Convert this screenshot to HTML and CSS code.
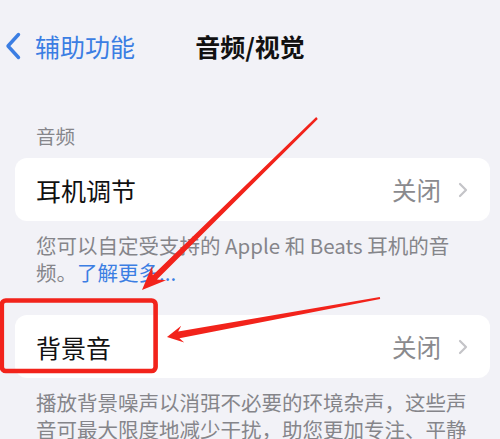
FILE: index.html
```html
<!DOCTYPE html>
<html lang="zh-CN">
<head>
<meta charset="utf-8">
<title>音频/视觉</title>
<link rel="stylesheet" href="styles.css">
</head>
<body>
<div class="screen">
  <header class="nav">
    <a class="back" href="#">
      <svg class="back-icon" width="16" height="28" viewBox="0 0 16 28" aria-hidden="true">
        <polyline points="13.5,2.5 3,14 13.5,25.5" fill="none" stroke="currentColor" stroke-width="3.4" stroke-linecap="round" stroke-linejoin="round"/>
      </svg>
      <span>辅助功能</span>
    </a>
    <h1 class="title">音频/视觉</h1>
    <span class="nav-spacer"></span>
  </header>

  <section class="group group-first">
    <h2 class="group-head">音频</h2>
    <div class="card">
      <div class="row">
        <span class="label">耳机调节</span>
        <span class="value">关闭</span>
        <svg class="chevron" width="10" height="16" viewBox="0 0 10 16" aria-hidden="true">
          <polyline points="2,2 8,8 2,14" fill="none" stroke="currentColor" stroke-width="2.2" stroke-linecap="round" stroke-linejoin="round"/>
        </svg>
      </div>
    </div>
    <p class="group-foot">您可以自定受支持的 Apple 和 Beats 耳机的音频。<a class="link" href="#">了解更多...</a></p>
  </section>

  <section class="group group-second">
    <div class="card">
      <div class="row">
        <span class="label">背景音</span>
        <span class="value">关闭</span>
        <svg class="chevron" width="10" height="16" viewBox="0 0 10 16" aria-hidden="true">
          <polyline points="2,2 8,8 2,14" fill="none" stroke="currentColor" stroke-width="2.2" stroke-linecap="round" stroke-linejoin="round"/>
        </svg>
      </div>
    </div>
    <p class="group-foot">播放背景噪声以消弭不必要的环境杂声，这些声音可最大限度地减少干扰，助您更加专注、平静</p>
  </section>

  <!-- red annotation layer drawn over the settings list -->
  <svg class="marks" width="500" height="439" viewBox="0 0 500 439" aria-hidden="true">
    <rect x="1.8" y="300.5" width="153.8" height="70.5" rx="4" fill="none" stroke="#f2231b" stroke-width="4.6"/>
    <polygon fill="#f2231b" points="317.8,118.9 156.96,279.5 166.1,280.3 142,290 152.1,266.1 152.74,275.2 316.2,117.1"/>
    <polygon fill="#f2231b" points="380.18,298.98 179.43,338.28 184.27,342.5 167,337 181.21,325.76 178.17,331.4 379.82,297.02"/>
  </svg>
</div>
</body>
</html>
```

FILE: styles.css
```css
html, body {
  margin: 0;
  padding: 0;
}

body {
  background: #f2f2f7;
  font-family: "Noto Sans CJK SC", "Noto Sans", sans-serif;
  color: #111;
}

.screen {
  position: relative;
  width: 500px;
  height: 439px;
  overflow: hidden;
  background: #f2f2f7;
}

/* navigation bar */
.nav {
  display: grid;
  grid-template-columns: 1fr auto 1fr;
  align-items: center;
  height: 36px;
  padding: 28px 0 0 5px;
}

.back {
  display: flex;
  align-items: center;
  gap: 14px;
  color: #3b7ee3;
  text-decoration: none;
  font-size: 25px;
  line-height: 36px;
}

.back-icon {
  display: block;
}

.title {
  margin: 0 0 0 -5px;
  font-size: 25px;
  line-height: 36px;
  font-weight: 700;
  color: #111;
}

/* grouped list */
.group-first {
  margin-top: 60px;
}

.group-second {
  margin-top: 29.5px;
}

.group-head {
  margin: 0 0 10px 36px;
  font-size: 19.5px;
  line-height: 24px;
  font-weight: 400;
  color: #86868b;
}

.card {
  margin: 0 10px 0 15px;
  background: #fff;
  border-radius: 12px;
}

.row {
  display: flex;
  align-items: center;
  height: 63px;
  padding: 0 22px 0 21px;
}

.label {
  flex: 1;
  font-size: 25px;
  line-height: 30px;
  color: #111;
}

.value {
  font-size: 24.5px;
  line-height: 30px;
  color: #8a8a8e;
}

.chevron {
  margin-left: 17px;
  color: #c4c4c8;
}

.group-foot {
  margin: 10.5px 29px 0 36px;
  font-size: 20.5px;
  line-height: 27px;
  color: #85858a;
}

.link {
  color: #3b7ee3;
  text-decoration: none;
}

/* annotation overlay */
.marks {
  position: absolute;
  left: 0;
  top: 0;
  pointer-events: none;
}
```
